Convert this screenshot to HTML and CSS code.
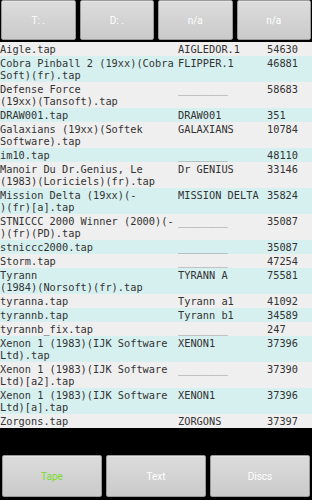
FILE: index.html
```html
<!DOCTYPE html>
<html lang="en">
<head>
    <meta charset="UTF-8">
    <meta name="viewport" content="width=device-width, initial-scale=1.0">
    <title>Tape Browser</title>
    <link rel="stylesheet" href="styles.css">
</head>
<body>
    <div class="screen">
        <nav class="top-bar">
            <button class="holo-button">T: .</button>
            <button class="holo-button">D: .</button>
            <button class="holo-button">n/a</button>
            <button class="holo-button">n/a</button>
        </nav>

        <div class="file-list">
            <div class="file-row"><span class="name">Aigle.tap</span><span class="label">AIGLEDOR.1</span><span class="size">54630</span></div>
            <div class="file-row"><span class="name">Cobra Pinball 2 (19xx)(Cobra<br>Soft)(fr).tap</span><span class="label">FLIPPER.1</span><span class="size">46881</span></div>
            <div class="file-row"><span class="name">Defense Force<br>(19xx)(Tansoft).tap</span><span class="label blank">________</span><span class="size">58683</span></div>
            <div class="file-row"><span class="name">DRAW001.tap</span><span class="label">DRAW001</span><span class="size">351</span></div>
            <div class="file-row"><span class="name">Galaxians (19xx)(Softek<br>Software).tap</span><span class="label">GALAXIANS</span><span class="size">10784</span></div>
            <div class="file-row"><span class="name">im10.tap</span><span class="label blank">________</span><span class="size">48110</span></div>
            <div class="file-row"><span class="name">Manoir Du Dr.Genius, Le<br>(1983)(Loriciels)(fr).tap</span><span class="label">Dr GENIUS</span><span class="size">33146</span></div>
            <div class="file-row"><span class="name">Mission Delta (19xx)(-<br>)(fr)[a].tap</span><span class="label">MISSION DELTA</span><span class="size">35824</span></div>
            <div class="file-row"><span class="name">STNICCC 2000 Winner (2000)(-<br>)(fr)(PD).tap</span><span class="label blank">________</span><span class="size">35087</span></div>
            <div class="file-row"><span class="name">stniccc2000.tap</span><span class="label blank">________</span><span class="size">35087</span></div>
            <div class="file-row"><span class="name">Storm.tap</span><span class="label blank">________</span><span class="size">47254</span></div>
            <div class="file-row"><span class="name">Tyrann<br>(1984)(Norsoft)(fr).tap</span><span class="label">TYRANN A</span><span class="size">75581</span></div>
            <div class="file-row"><span class="name">tyranna.tap</span><span class="label">Tyrann a1</span><span class="size">41092</span></div>
            <div class="file-row"><span class="name">tyrannb.tap</span><span class="label">Tyrann b1</span><span class="size">34589</span></div>
            <div class="file-row"><span class="name">tyrannb_fix.tap</span><span class="label blank">________</span><span class="size">247</span></div>
            <div class="file-row"><span class="name">Xenon 1 (1983)(IJK Software<br>Ltd).tap</span><span class="label">XENON1</span><span class="size">37396</span></div>
            <div class="file-row"><span class="name">Xenon 1 (1983)(IJK Software<br>Ltd)[a2].tap</span><span class="label blank">________</span><span class="size">37390</span></div>
            <div class="file-row"><span class="name">Xenon 1 (1983)(IJK Software<br>Ltd)[a].tap</span><span class="label">XENON1</span><span class="size">37396</span></div>
            <div class="file-row"><span class="name">Zorgons.tap</span><span class="label">ZORGONS</span><span class="size">37397</span></div>
        </div>

        <nav class="bottom-bar">
            <button class="holo-button active">Tape</button>
            <button class="holo-button">Text</button>
            <button class="holo-button">Discs</button>
        </nav>
    </div>
</body>
</html>
```

FILE: styles.css
```css
* {
    margin: 0;
    padding: 0;
    box-sizing: border-box;
}

body {
    background: #000;
    width: 312px;
    height: 500px;
    overflow: hidden;
    font-family: Roboto, "Liberation Sans", sans-serif;
}

.screen {
    display: flex;
    flex-direction: column;
    height: 500px;
}

.top-bar {
    display: flex;
    gap: 4px;
    padding: 0 1px 2px;
    height: 42px;
}

.bottom-bar {
    display: flex;
    gap: 4px;
    padding: 0 2px 3px;
    margin-top: auto;
    height: 45px;
}

.holo-button {
    flex: 1;
    background: linear-gradient(#dcdcdc, #cacaca);
    border: 1px solid #9a9a9a;
    border-radius: 2px;
    color: #fff;
    font-family: Roboto, "Liberation Sans", sans-serif;
    font-size: 10px;
    box-shadow: inset 0 1px 0 #e6e6e6;
}

.holo-button.active {
    color: #7ddc2a;
}

.file-list {
    font-family: "DejaVu Sans Mono", "Liberation Mono", monospace;
    font-size: 10.3px;
    line-height: 12px;
    color: #333;
}

.file-row {
    display: grid;
    grid-template-columns: 178px 89px 1fr;
    padding: 1px 0;
    background: #efefef;
}

.file-row:nth-child(even) {
    background: #d6f0f0;
}

.name {
    white-space: nowrap;
}

.label.blank {
    color: #888;
}
```
